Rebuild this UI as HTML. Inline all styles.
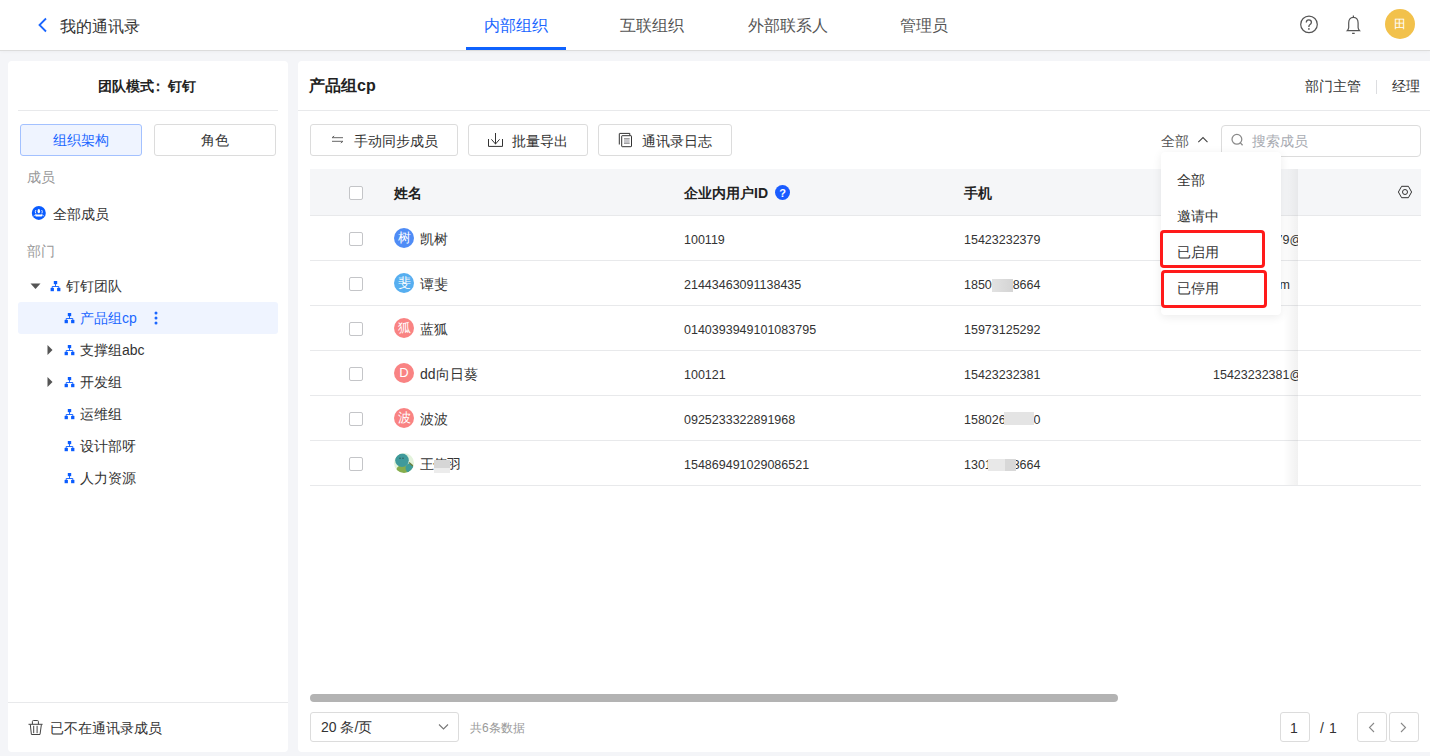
<!DOCTYPE html>
<html><head><meta charset="utf-8">
<style>
*{box-sizing:border-box;margin:0;padding:0}
html,body{width:1430px;height:756px;overflow:hidden;background:#f4f5f8;font-family:"Liberation Sans",sans-serif;color:#333}
.a{position:absolute;white-space:nowrap}
.hdr{position:absolute;left:0;top:0;width:1430px;height:51px;background:#fff;border-bottom:1px solid #dcdcdc;box-shadow:0 1px 3px rgba(0,0,0,0.03)}
.t16{font-size:16px;line-height:16px}
.t14{font-size:14px;line-height:14px}
.t13{font-size:13px;line-height:13px}
.t12{font-size:12px;line-height:12px}
.panel{position:absolute;background:#fff;border-radius:4px}
.btn{position:absolute;border:1px solid #dcdcdc;border-radius:3px;background:#fff}
.blue{color:#1a66ff}
.gray{color:#999}
.line{position:absolute;height:1px;background:#e8e9eb}
.cb{position:absolute;width:14px;height:14px;border:1px solid #c4c5c8;border-radius:2px;background:#fff}
.av{position:absolute;width:20px;height:20px;border-radius:50%;color:#fff;font-size:12px;line-height:20px;text-align:center}
.num{font-size:12.5px;line-height:13px;color:#333}
</style></head><body>

<!-- header -->
<div class="hdr"></div>
<svg class="a" style="left:37px;top:17px" width="12" height="16" viewBox="0 0 12 16"><path d="M9 1.5 L2.5 8 L9 14.5" fill="none" stroke="#1a66ff" stroke-width="1.8"/></svg>
<div class="a t16" style="left:60px;top:19px;color:#333">我的通讯录</div>

<div class="a t16 blue" style="left:484px;top:18px">内部组织</div>
<div class="a" style="left:466px;top:47px;width:100px;height:3px;background:#0f62fe"></div>
<div class="a t16" style="left:620px;top:18px;color:#555">互联组织</div>
<div class="a t16" style="left:748px;top:18px;color:#555">外部联系人</div>
<div class="a t16" style="left:900px;top:18px;color:#555">管理员</div>

<svg class="a" style="left:1299px;top:15px" width="20" height="20" viewBox="0 0 20 20"><circle cx="10" cy="9.4" r="8.3" fill="none" stroke="#555" stroke-width="1.2"/><path d="M7.3 7.6 Q7.3 4.9 9.8 4.9 Q12.4 4.9 12.4 7.3 Q12.4 8.9 10.8 9.8 Q9.9 10.3 9.9 11.4 L9.9 12.1" fill="none" stroke="#555" stroke-width="1.3"/><circle cx="9.9" cy="13.9" r="0.85" fill="#555"/></svg>
<svg class="a" style="left:1344px;top:14px" width="20" height="22" viewBox="0 0 20 22"><path d="M9.4 3.4 C6.3 3.4 4.7 5.6 4.7 9 L4.7 13.6 Q4.7 15.3 3.3 16.6 L15.5 16.6 Q14.1 15.3 14.1 13.6 L14.1 9 C14.1 5.6 12.5 3.4 9.4 3.4 Z" fill="none" stroke="#555" stroke-width="1.2"/><path d="M8.1 19.3 L10.7 19.3 M9.4 1.6 L9.4 3" stroke="#555" stroke-width="1.2"/></svg>
<div class="a" style="left:1385px;top:9px;width:30px;height:30px;border-radius:50%;background:#f2c14b;color:#fff;font-size:12px;line-height:30px;text-align:center">田</div>

<!-- left panel -->
<div class="panel" style="left:8px;top:61px;width:280px;height:691px"></div>
<div class="a t14" style="left:98px;top:79px;font-weight:bold;color:#222">团队模式<span style="position:relative;left:-3px">：</span>钉钉</div>
<div class="line" style="left:18px;top:110px;width:260px"></div>
<div class="btn" style="left:20px;top:124px;width:122px;height:32px;background:#eff4ff;border-color:#a3c1ff"></div>
<div class="a t14 blue" style="left:53px;top:133px">组织架构</div>
<div class="btn" style="left:154px;top:124px;width:122px;height:32px"></div>
<div class="a t14" style="left:201px;top:133px">角色</div>

<div class="a t14 gray" style="left:27px;top:170px">成员</div>
<svg class="a" style="left:31px;top:205px" width="15" height="15" viewBox="0 0 15 15"><circle cx="7.8" cy="7.9" r="7" fill="#0a5cff"/><ellipse cx="7.8" cy="6.2" rx="1.25" ry="2.1" fill="#fff"/><path d="M4.6 8.3 Q3.9 6.3 4.9 5 M11 8.3 Q11.7 6.3 10.7 5" fill="none" stroke="#fff" stroke-width="0.9"/><path d="M2.6 11.4 Q3.6 9.6 5.5 9.2 M13 11.4 Q12 9.6 10.1 9.2" fill="none" stroke="#fff" stroke-width="0.8" opacity="0.8"/><rect x="4.2" y="9.4" width="7.2" height="2.2" rx="1" fill="#fff"/></svg>
<div class="a t14" style="left:53px;top:207px">全部成员</div>
<div class="a t14 gray" style="left:27px;top:244px">部门</div>

<!-- tree -->
<div class="a" style="left:18px;top:302px;width:260px;height:32px;background:#eff4ff;border-radius:3px"></div>

<svg class="a" style="left:30px;top:283px" width="11" height="7" viewBox="0 0 11 7"><path d="M0.5 0.5 L10.5 0.5 L5.5 6 Z" fill="#555"/></svg>
<svg class="a" style="left:50px;top:281px" width="11" height="11" viewBox="0 0 11 11"><rect x="3.8" y="0" width="3.4" height="3.2" fill="#0a5cff"/><path d="M5.5 3 L5.5 5.5 M2.2 5.5 L8.8 5.5 M2.2 5.5 L2.2 7 M8.8 5.5 L8.8 7" stroke="#0a5cff" stroke-width="0.9" fill="none"/><rect x="0.6" y="6.9" width="3.3" height="3.3" fill="#0a5cff"/><rect x="7.1" y="6.9" width="3.3" height="3.3" fill="#0a5cff"/></svg>
<svg class="a" style="left:64px;top:313px" width="11" height="11" viewBox="0 0 11 11"><rect x="3.8" y="0" width="3.4" height="3.2" fill="#0a5cff"/><path d="M5.5 3 L5.5 5.5 M2.2 5.5 L8.8 5.5 M2.2 5.5 L2.2 7 M8.8 5.5 L8.8 7" stroke="#0a5cff" stroke-width="0.9" fill="none"/><rect x="0.6" y="6.9" width="3.3" height="3.3" fill="#0a5cff"/><rect x="7.1" y="6.9" width="3.3" height="3.3" fill="#0a5cff"/></svg>
<svg class="a" style="left:64px;top:345px" width="11" height="11" viewBox="0 0 11 11"><rect x="3.8" y="0" width="3.4" height="3.2" fill="#0a5cff"/><path d="M5.5 3 L5.5 5.5 M2.2 5.5 L8.8 5.5 M2.2 5.5 L2.2 7 M8.8 5.5 L8.8 7" stroke="#0a5cff" stroke-width="0.9" fill="none"/><rect x="0.6" y="6.9" width="3.3" height="3.3" fill="#0a5cff"/><rect x="7.1" y="6.9" width="3.3" height="3.3" fill="#0a5cff"/></svg>
<svg class="a" style="left:64px;top:377px" width="11" height="11" viewBox="0 0 11 11"><rect x="3.8" y="0" width="3.4" height="3.2" fill="#0a5cff"/><path d="M5.5 3 L5.5 5.5 M2.2 5.5 L8.8 5.5 M2.2 5.5 L2.2 7 M8.8 5.5 L8.8 7" stroke="#0a5cff" stroke-width="0.9" fill="none"/><rect x="0.6" y="6.9" width="3.3" height="3.3" fill="#0a5cff"/><rect x="7.1" y="6.9" width="3.3" height="3.3" fill="#0a5cff"/></svg>
<svg class="a" style="left:64px;top:409px" width="11" height="11" viewBox="0 0 11 11"><rect x="3.8" y="0" width="3.4" height="3.2" fill="#0a5cff"/><path d="M5.5 3 L5.5 5.5 M2.2 5.5 L8.8 5.5 M2.2 5.5 L2.2 7 M8.8 5.5 L8.8 7" stroke="#0a5cff" stroke-width="0.9" fill="none"/><rect x="0.6" y="6.9" width="3.3" height="3.3" fill="#0a5cff"/><rect x="7.1" y="6.9" width="3.3" height="3.3" fill="#0a5cff"/></svg>
<svg class="a" style="left:64px;top:441px" width="11" height="11" viewBox="0 0 11 11"><rect x="3.8" y="0" width="3.4" height="3.2" fill="#0a5cff"/><path d="M5.5 3 L5.5 5.5 M2.2 5.5 L8.8 5.5 M2.2 5.5 L2.2 7 M8.8 5.5 L8.8 7" stroke="#0a5cff" stroke-width="0.9" fill="none"/><rect x="0.6" y="6.9" width="3.3" height="3.3" fill="#0a5cff"/><rect x="7.1" y="6.9" width="3.3" height="3.3" fill="#0a5cff"/></svg>
<svg class="a" style="left:64px;top:473px" width="11" height="11" viewBox="0 0 11 11"><rect x="3.8" y="0" width="3.4" height="3.2" fill="#0a5cff"/><path d="M5.5 3 L5.5 5.5 M2.2 5.5 L8.8 5.5 M2.2 5.5 L2.2 7 M8.8 5.5 L8.8 7" stroke="#0a5cff" stroke-width="0.9" fill="none"/><rect x="0.6" y="6.9" width="3.3" height="3.3" fill="#0a5cff"/><rect x="7.1" y="6.9" width="3.3" height="3.3" fill="#0a5cff"/></svg>
<div class="a t14" style="left:66px;top:279px">钉钉团队</div>

<div class="a t14 blue" style="left:80px;top:311px">产品组cp</div>
<svg class="a" style="left:153px;top:311px" width="6" height="14" viewBox="0 0 6 14"><circle cx="3" cy="2" r="1.5" fill="#1a66ff"/><circle cx="3" cy="7" r="1.5" fill="#1a66ff"/><circle cx="3" cy="12" r="1.5" fill="#1a66ff"/></svg>

<svg class="a" style="left:47px;top:345px" width="6" height="10" viewBox="0 0 6 10"><path d="M0.5 0 L5.5 5 L0.5 10 Z" fill="#555"/></svg>
<div class="a t14" style="left:80px;top:343px">支撑组abc</div>
<svg class="a" style="left:47px;top:377px" width="6" height="10" viewBox="0 0 6 10"><path d="M0.5 0 L5.5 5 L0.5 10 Z" fill="#555"/></svg>
<div class="a t14" style="left:80px;top:375px">开发组</div>
<div class="a t14" style="left:80px;top:407px">运维组</div>
<div class="a t14" style="left:80px;top:439px">设计部呀</div>
<div class="a t14" style="left:80px;top:471px">人力资源</div>

<div class="line" style="left:8px;top:702px;width:280px"></div>
<svg class="a" style="left:24px;top:714px" width="24" height="26" viewBox="0 0 24 26"><path d="M4.5 10.3 L18.6 10.3 M8.4 10.3 L8.4 7.5 Q8.4 6.5 9.4 6.5 L13.4 6.5 Q14.4 6.5 14.4 7.5 L14.4 10.3 M6.3 10.5 L7.4 20.5 L16 20.5 L17.4 10.5 M9.7 11.8 L9.7 19.2 M13.1 11.8 L13.1 19.2" fill="none" stroke="#444" stroke-width="1"/></svg>
<div class="a t14" style="left:50px;top:721px">已不在通讯录成员</div>

<!-- right panel -->
<div class="panel" style="left:298px;top:61px;width:1140px;height:691px"></div>
<div class="a t16" style="left:309px;top:78px;font-weight:bold;color:#222">产品组cp</div>
<div class="a t14" style="left:1305px;top:79px">部门主管</div>
<div class="a" style="left:1376px;top:80px;width:1px;height:14px;background:#dcdde0"></div>
<div class="a t14" style="left:1392px;top:79px">经理</div>
<div class="line" style="left:298px;top:110px;width:1132px"></div>

<div class="btn" style="left:310px;top:124px;width:148px;height:32px"></div>
<svg class="a" style="left:331px;top:135px" width="13" height="10" viewBox="0 0 13 10"><path d="M1 2.7 L12 2.7 M1 2.7 L3.2 1 M12 6.3 L1 6.3 M12 6.3 L9.8 8" fill="none" stroke="#666" stroke-width="1"/></svg>
<div class="a t14" style="left:354px;top:134px">手动同步成员</div>

<div class="btn" style="left:468px;top:124px;width:120px;height:32px"></div>
<svg class="a" style="left:480px;top:125px" width="30" height="30" viewBox="0 0 30 30"><path d="M15.5 8 L15.5 19.3 M11.4 14.3 L15.5 19 L19.6 14.3 M8.5 14 L8.5 21.4 L22.5 21.4 L22.5 14" fill="none" stroke="#333" stroke-width="1"/></svg>
<div class="a t14" style="left:512px;top:134px">批量导出</div>

<div class="btn" style="left:598px;top:124px;width:134px;height:32px"></div>
<svg class="a" style="left:610px;top:125px" width="30" height="30" viewBox="0 0 30 30"><path d="M9.3 19.5 L9.3 8.8 Q9.3 8.4 9.7 8.4 L19.8 8.4 L19.8 10.5" fill="none" stroke="#333" stroke-width="1"/><rect x="11.7" y="10.7" width="9.8" height="11" rx="0.5" fill="#fff" stroke="#333" stroke-width="1"/><rect x="14" y="13.3" width="5.6" height="5.4" fill="#c8c8cc"/><path d="M14 13.6 L19.6 13.6 M14 18.4 L19.6 18.4" stroke="#888" stroke-width="0.8"/></svg>
<div class="a t14" style="left:642px;top:134px">通讯录日志</div>

<div class="a t14" style="left:1161px;top:134px;color:#555">全部</div>
<svg class="a" style="left:1190px;top:125px" width="30" height="30" viewBox="0 0 30 30"><path d="M8.3 17.1 L13 12.5 L17.5 17.1" fill="none" stroke="#444" stroke-width="1.1"/></svg>
<div class="btn" style="left:1221px;top:125px;width:200px;height:32px;border-radius:4px"></div>
<svg class="a" style="left:1230px;top:133px" width="15" height="15" viewBox="0 0 15 15"><circle cx="6.9" cy="6.3" r="4.9" fill="none" stroke="#8a8a8a" stroke-width="1.25"/><path d="M10.4 9.9 L12.6 12.2" stroke="#8a8a8a" stroke-width="1.3"/></svg>
<div class="a t14" style="left:1252px;top:134px;color:#a8abb2">搜索成员</div>

<!-- table -->
<div class="a" style="left:310px;top:169px;width:1111px;height:46px;background:#f5f6f8"></div>
<div class="line" style="left:310px;top:215px;width:1111px"></div>
<div class="line" style="left:310px;top:260px;width:1111px"></div>
<div class="line" style="left:310px;top:305px;width:1111px"></div>
<div class="line" style="left:310px;top:350px;width:1111px"></div>
<div class="line" style="left:310px;top:395px;width:1111px"></div>
<div class="line" style="left:310px;top:440px;width:1111px"></div>
<div class="line" style="left:310px;top:485px;width:1111px"></div>

<div class="cb" style="left:349px;top:186px"></div>
<div class="a t14" style="left:394px;top:186px;font-weight:bold;color:#222">姓名</div>
<div class="a t14" style="left:684px;top:186px;font-weight:bold;color:#222">企业内用户ID</div>
<svg class="a" style="left:775px;top:185px" width="15" height="15" viewBox="0 0 15 15"><circle cx="7.5" cy="7.5" r="7.5" fill="#1a5cff"/><text x="7.5" y="11.6" text-anchor="middle" font-size="11" font-weight="bold" font-family="Liberation Sans" fill="#fff">?</text></svg>
<div class="a t14" style="left:964px;top:186px;font-weight:bold;color:#222">手机</div>

<div class="cb" style="left:349px;top:232px"></div>
<div class="av" style="left:394px;top:228px;background:#4f8cf6;font-size:13px">树</div>
<div class="a t14" style="left:420px;top:232px">凯树</div>
<div class="a num" style="left:684px;top:233.5px">100119</div>
<div class="a num" style="left:964px;top:233.5px">15423232379</div>
<div class="a num" style="left:1213px;top:233.5px;width:85px;overflow:hidden">15423232379@dingtalk.com</div>
<div class="cb" style="left:349px;top:277px"></div>
<div class="av" style="left:394px;top:273px;background:#56aef0;font-size:13px">斐</div>
<div class="a t14" style="left:420px;top:277px">谭斐</div>
<div class="a num" style="left:684px;top:278.5px">21443463091138435</div>
<div class="a num" style="left:964px;top:278.5px">18500008664</div><div class="a" style="left:992px;top:279px;width:21px;height:13px;background:linear-gradient(to right,#e2e2e2,#d4d4d4);filter:blur(0.5px)"></div>
<div class="a num" style="left:1170px;top:278.5px;width:120px;text-align:right">tanfei@qq.com</div>
<div class="cb" style="left:349px;top:322px"></div>
<div class="av" style="left:394px;top:318px;background:#f98383;font-size:13px">狐</div>
<div class="a t14" style="left:420px;top:322px">蓝狐</div>
<div class="a num" style="left:684px;top:323.5px">0140393949101083795</div>
<div class="a num" style="left:964px;top:323.5px">15973125292</div>
<div class="cb" style="left:349px;top:367px"></div>
<div class="av" style="left:394px;top:363px;background:#f98383;font-size:13px">D</div>
<div class="a t14" style="left:420px;top:367px">dd向日葵</div>
<div class="a num" style="left:684px;top:368.5px">100121</div>
<div class="a num" style="left:964px;top:368.5px">15423232381</div>
<div class="a num" style="left:1213px;top:368.5px;width:85px;overflow:hidden">15423232381@dingtalk.com</div>
<div class="cb" style="left:349px;top:412px"></div>
<div class="av" style="left:394px;top:408px;background:#f98383;font-size:13px">波</div>
<div class="a t14" style="left:420px;top:412px">波波</div>
<div class="a num" style="left:684px;top:413.5px">0925233322891968</div>
<div class="a num" style="left:964px;top:413.5px">15802600000</div><div class="a" style="left:1004px;top:412px;width:30px;height:13px;background:#e4e4e4;filter:blur(0.5px)"></div>
<div class="cb" style="left:349px;top:457px"></div>
<svg class="a" style="left:394px;top:453px" width="20" height="20" viewBox="0 0 20 20"><defs><clipPath id="cc"><circle cx="10" cy="10" r="10"/></clipPath></defs><g clip-path="url(#cc)"><rect width="20" height="20" fill="#e3f3dc"/><ellipse cx="9.5" cy="16.5" rx="7" ry="4.5" fill="#86ad4c"/><ellipse cx="15.5" cy="15" rx="4" ry="4.5" fill="#3f9c98"/><path d="M15 9.5 L19 13" stroke="#6f7f3a" stroke-width="1.2"/><circle cx="8" cy="7.3" r="6.8" fill="#3f9a9b"/><circle cx="6" cy="5.3" r="0.7" fill="#2b4f4e"/><circle cx="9" cy="5.3" r="0.7" fill="#2b4f4e"/></g></svg>
<div class="a t14" style="left:420px;top:457px;letter-spacing:-0.6px">王伟羽</div>
<div class="a" style="left:434px;top:460px;width:16px;height:13px;background:linear-gradient(#d6d6d6 0,#d6d6d6 60%,#ececec 60%);filter:blur(0.4px)"></div>
<div class="a num" style="left:684px;top:458.5px">154869491029086521</div>
<div class="a num" style="left:964px;top:458.5px">13010003664</div><div class="a" style="left:988px;top:459px;width:28px;height:12px;background:linear-gradient(to right,#e8e8e8 0,#e8e8e8 60%,#d8d8d8 60%);filter:blur(0.5px)"></div>

<!-- fixed right col -->
<div class="a" style="left:1283px;top:169px;width:15px;height:316px;background:linear-gradient(to right,rgba(0,0,0,0),rgba(0,0,0,0.055))"></div>
<div class="a" style="left:1298px;top:169px;width:123px;height:46px;background:#f5f6f8"></div>
<svg class="a" style="left:1397px;top:185px" width="16" height="14" viewBox="0 0 16 14"><path d="M4.6 1.3 L11.4 1.3 L14.6 7 L11.4 12.7 L4.6 12.7 L1.4 7 Z" fill="none" stroke="#333" stroke-width="1"/><circle cx="8" cy="7" r="2.5" fill="none" stroke="#333" stroke-width="1"/></svg>

<!-- dropdown -->
<div class="a" style="left:1161px;top:152px;width:120px;height:163px;background:#fff;border-radius:4px;box-shadow:0 2px 10px rgba(0,0,0,0.08)"></div>
<div class="a t14" style="left:1177px;top:173px">全部</div>
<div class="a t14" style="left:1177px;top:209px">邀请中</div>
<div class="a t14" style="left:1177px;top:245px">已启用</div>
<div class="a t14" style="left:1177px;top:281px">已停用</div>
<div class="a" style="left:1160px;top:230px;width:105px;height:38px;border:3px solid #ff1a1a;border-radius:4px"></div>
<div class="a" style="left:1161px;top:270px;width:106px;height:38px;border:3px solid #ff1a1a;border-radius:4px"></div>

<!-- footer -->
<div class="a" style="left:310px;top:694px;width:808px;height:8px;background:#b3b3b3;border-radius:4px"></div>
<div class="btn" style="left:310px;top:712px;width:149px;height:30px"></div>
<div class="a t14" style="left:321px;top:720px">20 条/页</div>
<svg class="a" style="left:438px;top:723px" width="11" height="8" viewBox="0 0 11 8"><path d="M1 1.5 L5.5 6 L10 1.5" fill="none" stroke="#777" stroke-width="1.1"/></svg>
<div class="a t12 gray" style="left:470px;top:722px">共6条数据</div>

<div class="btn" style="left:1280px;top:712px;width:30px;height:30px"></div>
<div class="a" style="left:1290px;top:721px;font-size:14px;line-height:14px">1</div>
<div class="a" style="left:1320px;top:721px;font-size:14px;line-height:14px">/</div><div class="a" style="left:1329px;top:721px;font-size:14px;line-height:14px">1</div>
<div class="btn" style="left:1357px;top:712px;width:30px;height:30px"></div>
<svg class="a" style="left:1367px;top:722px" width="9" height="11" viewBox="0 0 9 11"><path d="M7 1 L2.5 5.5 L7 10" fill="none" stroke="#888" stroke-width="1.1"/></svg>
<div class="btn" style="left:1389px;top:712px;width:30px;height:30px"></div>
<svg class="a" style="left:1399px;top:722px" width="9" height="11" viewBox="0 0 9 11"><path d="M2 1 L6.5 5.5 L2 10" fill="none" stroke="#888" stroke-width="1.1"/></svg>

</body></html>
